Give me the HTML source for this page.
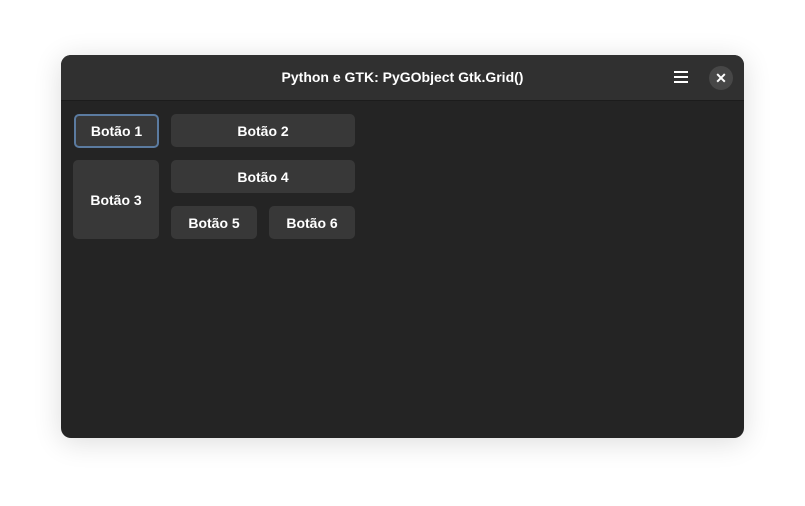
<!DOCTYPE html><html><head><style>
body{margin:0;width:805px;height:506px;background:#fff;position:relative;overflow:hidden;font-family:"Liberation Sans",sans-serif}
.win{position:absolute;left:61px;top:55px;width:683px;height:383px;border-radius:10px;background:#242424;box-shadow:0 4px 28px rgba(0,0,0,.14);overflow:hidden}
.hd{position:absolute;left:0;top:0;width:100%;height:45px;background:#303030;border-bottom:1px solid #1c1c1c}
.t{position:absolute;left:0;right:0;top:14px;text-align:center;color:#fff;font-weight:bold;font-size:14px}
.b{position:absolute;background:#383838;border-radius:5px;color:#fff;font-weight:bold;font-size:14px;display:flex;align-items:center;justify-content:center}
.x{position:absolute;left:648px;top:11px;width:24px;height:24px;border-radius:50%;background:#474747;color:#fff;font-size:14px;font-weight:bold;text-align:center;line-height:24px}
.m{position:absolute;left:613px;top:16px;width:14px;height:2px;background:#fff;box-shadow:0 5px 0 #fff,0 10px 0 #fff}
</style></head><body><div class="win">
<div class="hd"><div class="t">Python e GTK: PyGObject Gtk.Grid()</div><div class="m"></div><div class="x">✕</div></div>
<div class="b" style="left:13px;top:59px;width:81px;height:30px;border:2px solid #5b7ba0">Botão 1</div>
<div class="b" style="left:110px;top:59px;width:184px;height:33px">Botão 2</div>
<div class="b" style="left:12px;top:105px;width:86px;height:79px">Botão 3</div>
<div class="b" style="left:110px;top:105px;width:184px;height:33px">Botão 4</div>
<div class="b" style="left:110px;top:151px;width:86px;height:33px">Botão 5</div>
<div class="b" style="left:208px;top:151px;width:86px;height:33px">Botão 6</div>
</div></body></html>
